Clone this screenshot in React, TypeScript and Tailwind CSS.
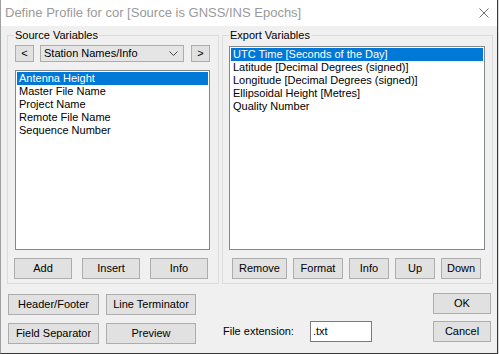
import React from 'react';

const sourceItems = ['Antenna Height', 'Master File Name', 'Project Name', 'Remote File Name', 'Sequence Number'];
const exportItems = [
  'UTC Time [Seconds of the Day]',
  'Latitude [Decimal Degrees (signed)]',
  'Longitude [Decimal Degrees (signed)]',
  'Ellipsoidal Height [Metres]',
  'Quality Number',
];

// classic win32 push button
function Btn({ label, className = '' }: { label: string; className?: string }) {
  return (
    <button
      type="button"
      className={`h-[21px] flex items-center justify-center bg-[#e1e1e1] border border-[#adadad] text-[11px] leading-[13px] text-black ${className}`}
    >
      {label}
    </button>
  );
}

function ListBox({ items, className = '' }: { items: string[]; className?: string }) {
  return (
    <div className={`bg-white border border-[#828790] p-[1px] ${className}`}>
      {items.map((t, i) => (
        <div
          key={t}
          className={`h-[13px] pl-[2px] text-[11px] leading-[13px] whitespace-nowrap ${
            i === 0 ? 'bg-[#0078d7] text-white' : 'text-black'
          }`}
        >
          {t}
        </div>
      ))}
    </div>
  );
}

function Group({ title, className = '', children }: { title: string; className?: string; children: React.ReactNode }) {
  return (
    <fieldset className={`border border-[#dcdcdc] ${className}`}>
      <legend className="ml-[6px] px-[1px] text-[11px] leading-[13px] text-black">{title}</legend>
      {children}
    </fieldset>
  );
}

export default function App() {
  return (
    <div className="w-[499px] h-[354px] bg-[#dcdcdc] font-['Liberation_Sans',Arial,sans-serif]">
      <div className="w-[498px] h-[354px] flex flex-col bg-[#f0f0f0] border-l border-l-[#a0a0a0] border-r border-r-[#3a3a3a] border-b border-b-[#3a3a3a]">
        {/* title bar */}
        <div className="h-[26px] shrink-0 bg-white flex items-center justify-between pl-[4px] pr-[8px]">
          <span className="text-[13px] text-[#9a9a9a] whitespace-nowrap">
            Define Profile for cor [Source is GNSS/INS Epochs]
          </span>
          <svg width="10" height="10" viewBox="0 0 10 10">
            <path d="M0.5 0.5 L9.5 9.5 M9.5 0.5 L0.5 9.5" stroke="#707070" strokeWidth="1" fill="none" />
          </svg>
        </div>

        <div className="flex-1 pl-[6px] pr-[4px] pt-[3px]">
          <div className="flex gap-[3px]">
            <Group title="Source Variables" className="w-[212px] h-[255px]">
              <div className="flex mt-[3px] pl-[7px]">
                <Btn label="<" className="w-[19px] !h-[17px]" />
                <div className="ml-[6px] w-[144px] h-[17px] bg-[#e5e5e5] border border-[#acacac] flex items-center justify-between pl-[3px] pr-[5px] text-[11px]">
                  <span>Station Names/Info</span>
                  <svg width="9" height="5" viewBox="0 0 9 5">
                    <path d="M0.5 0.5 L4.5 4.5 L8.5 0.5" stroke="#444" strokeWidth="1" fill="none" />
                  </svg>
                </div>
                <Btn label=">" className="ml-[7px] w-[19px] !h-[17px]" />
              </div>
              <ListBox items={sourceItems} className="mt-[8px] ml-[7px] w-[195px] h-[180px]" />
              <div className="flex mt-[8px] pl-[6px] gap-[10px]">
                <Btn label="Add" className="w-[58px]" />
                <Btn label="Insert" className="w-[58px]" />
                <Btn label="Info" className="w-[58px]" />
              </div>
            </Group>

            <Group title="Export Variables" className="w-[271px] h-[255px]">
              <ListBox items={exportItems} className="mt-[4px] ml-[6px] w-[256px] h-[204px]" />
              <div className="flex mt-[8px] pl-[9px] gap-[6px]">
                <Btn label="Remove" className="w-[55px]" />
                <Btn label="Format" className="w-[50px]" />
                <Btn label="Info" className="w-[40px]" />
                <Btn label="Up" className="w-[40px]" />
                <Btn label="Down" className="w-[40px]" />
              </div>
            </Group>
          </div>

          <div className="flex">
            <div className="ml-[1px] mt-[10px] grid grid-cols-[91px_90px] gap-x-[7px] gap-y-[8px]">
              <Btn label="Header/Footer" />
              <Btn label="Line Terminator" />
              <Btn label="Field Separator" />
              <Btn label="Preview" />
            </div>
            <div className="ml-[27px] mt-[37px] flex items-center h-[21px] text-[11px]">
              <span className="w-[87px]">File extension:</span>
              <div className="w-[62px] h-[21px] bg-white border border-[#7a7a7a] flex items-center pl-[2px]">.txt</div>
            </div>
            <div className="ml-auto mr-[2px] mt-[9px] flex flex-col gap-[7px]">
              <Btn label="OK" className="w-[58px]" />
              <Btn label="Cancel" className="w-[58px]" />
            </div>
          </div>
        </div>
      </div>
    </div>
  );
}
